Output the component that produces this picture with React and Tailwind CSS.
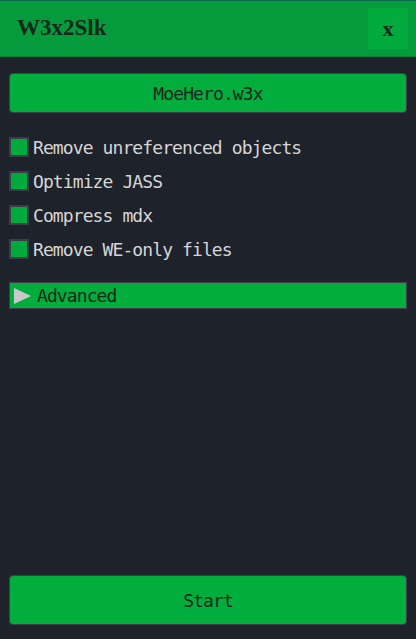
const options = [
  "Remove unreferenced objects",
  "Optimize JASS",
  "Compress mdx",
  "Remove WE-only files",
];

const mono = "font-['DejaVu_Sans_Mono',monospace] text-[18px] tracking-[-0.9px]";

function Option({ label }) {
  return (
    <label className="flex h-5 items-center gap-1">
      <span className="box-border h-5 w-5 border-2 border-[#383d47] bg-[#00ab3d]" />
      <span className={`${mono} text-[#d6d6d6]`}>{label}</span>
    </label>
  );
}

export default function App() {
  return (
    <div className="flex h-[639px] w-[416px] flex-col bg-[#1e222b]">
      <header className="flex h-[57px] shrink-0 items-center justify-between border-t border-b border-t-[#0b6b48] border-b-[#07813a] bg-[#059b3c] pl-[17px] pr-2">
        <h1 className="font-['Liberation_Serif',serif] text-[23px] font-bold text-[#132a1b]">
          W3x2Slk
        </h1>
        <button className="flex h-[41px] w-10 items-center justify-center bg-[#00aa3d] font-['Liberation_Serif',serif] text-[22px] font-bold leading-none text-[#132a1b]">
          x
        </button>
      </header>

      <div className="flex flex-1 flex-col px-[9px] pb-[14px] pt-4">
        <button className={`h-10 rounded-[4px] border border-[#3b404a] bg-[#00ad3d] ${mono} text-[#17261b]`}>
          MoeHero.w3x
        </button>

        <div className="mt-6 flex flex-col gap-[14px]">
          {options.map((o) => (
            <Option key={o} label={o} />
          ))}
        </div>

        <div className="mt-[23px] flex h-[27px] items-center gap-[6px] border border-[#3b404a] bg-[#00ad3d] pl-1">
          <svg width="17" height="16" viewBox="0 0 17 16">
            <path d="M0 0 L17 8 L0 16 Z" fill="#c8c8c8" />
          </svg>
          <span className={`${mono} text-[#17261b]`}>Advanced</span>
        </div>

        <button className={`mt-auto h-[50px] rounded-[4px] border border-[#3b404a] bg-[#00ad3d] ${mono} text-[#17261b]`}>
          Start
        </button>
      </div>
    </div>
  );
}
